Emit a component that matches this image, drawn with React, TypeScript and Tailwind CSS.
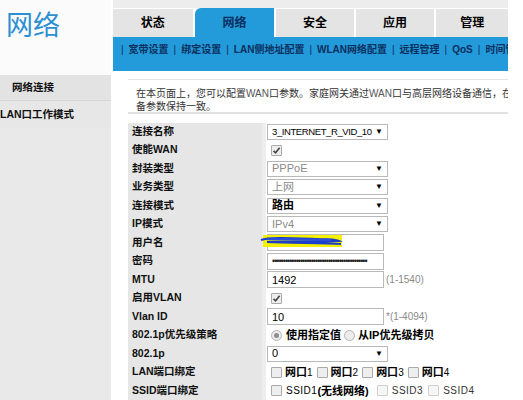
import React from "react";

const F = { fontFamily: '"Liberation Sans", "Noto Sans CJK SC", sans-serif' };

function Arrow() {
  return <span className="text-[8px] text-black leading-none">▼</span>;
}

function Select({ text, tone = "gray", bold = false, small = false }: { text: string; tone?: "gray" | "black"; bold?: boolean; small?: boolean }) {
  return (
    <div className="w-[121px] h-[16px] border border-[#b9b9b9] bg-white flex items-center justify-between pl-[4px] pr-[4px]">
      <span className={`${small ? "text-[9.5px] tracking-[-0.4px]" : "text-[11px]"} leading-none ${tone === "gray" ? "text-[#8a8a8a]" : "text-black"} ${bold ? "font-bold" : ""}`}>{text}</span>
      <Arrow />
    </div>
  );
}

function Check({ checked = false, light = false }: { checked?: boolean; light?: boolean }) {
  return (
    <div className={`w-[11px] h-[11px] border ${light ? "border-[#cfcfcf] bg-[#f6f6f6]" : "border-[#a9a9a9] bg-[#eeeeee]"} rounded-[1px] flex items-center justify-center`}>
      {checked && (
        <svg width="9" height="9" viewBox="0 0 9 9">
          <path d="M1.5 4.8 L3.6 6.8 L7.6 1.8" stroke="#444" strokeWidth="1.6" fill="none" />
        </svg>
      )}
    </div>
  );
}

function Radio({ checked = false }: { checked?: boolean }) {
  return (
    <div className="w-[11px] h-[11px] rounded-full border border-[#b5b5b5] bg-[#ececec] flex items-center justify-center">
      {checked && <div className="w-[5px] h-[5px] rounded-full bg-[#8d8d8d]" />}
    </div>
  );
}

function Input({ children, w = 117 }: { children?: React.ReactNode; w?: number }) {
  return (
    <div className="h-[17px] border border-[#b9b9b9] bg-white flex items-center pl-[4px] text-[11px] text-black overflow-hidden" style={{ width: w }}>
      {children}
    </div>
  );
}

const labels = [
  "连接名称",
  "使能WAN",
  "封装类型",
  "业务类型",
  "连接模式",
  "IP模式",
  "用户名",
  "密码",
  "MTU",
  "启用VLAN",
  "Vlan ID",
  "802.1p优先级策略",
  "802.1p",
  "LAN端口绑定",
  "SSID端口绑定",
];

const subMenu = ["宽带设置", "绑定设置", "LAN侧地址配置", "WLAN网络配置", "远程管理", "QoS", "时间管理"];

export default function App() {
  const values: React.ReactNode[] = [
    <Select key="a" text="3_INTERNET_R_VID_10" tone="black" small />,
    <div key="b" className="pl-[4px]"><Check checked /></div>,
    <Select key="c" text="PPPoE" />,
    <Select key="d" text="上网" />,
    <Select key="e" text="路由" tone="black" bold />,
    <Select key="f" text="IPv4" />,
    <div key="g" className="relative">
      <Input />
      <svg className="absolute left-[-8px] top-[-1px]" width="100" height="18" viewBox="0 0 100 18">
        <rect x="4" y="2" width="79" height="12" fill="#f4f000" />
        <path d="M2 7 C 10 4, 30 5, 60 6 C 70 6, 76 6, 80 8 C 60 9, 30 8, 8 9 C 30 10, 60 10, 82 11" stroke="#1b3fc9" strokeWidth="2" fill="none" />
        <path d="M8 6 L 72 7" stroke="#2a4fd8" strokeWidth="2.4" fill="none" />
      </svg>
    </div>,
    <Input key="h">
      <span className="text-[9px] tracking-[-1px] text-[#222] leading-none whitespace-nowrap">••••••••••••••••••••••••••••••••••••••••••••</span>
    </Input>,
    <div key="i" className="flex items-center">
      <Input>1492</Input>
      <span className="text-[10px] text-[#8a8a8a] ml-[2px]">(1-1540)</span>
    </div>,
    <div key="j" className="pl-[4px]"><Check checked /></div>,
    <div key="k" className="flex items-center">
      <Input>10</Input>
      <span className="text-[10px] text-[#8a8a8a] ml-[2px]">*(1-4094)</span>
    </div>,
    <div key="l" className="flex items-center pl-[4px] text-[11px] font-bold text-black">
      <Radio checked />
      <span className="ml-[4px]">使用指定值</span>
      <span className="ml-[3px]"><Radio /></span>
      <span className="ml-[3px]">从IP优先级拷贝</span>
    </div>,
    <Select key="m" text="0" tone="black" />,
    <div key="n" className="flex items-center pl-[4px] text-[11px] text-black">
      {["1", "2", "3", "4"].map((n) => (
        <span key={n} className="flex items-center mr-[4px]">
          <Check />
          <span className="ml-[3px] font-bold">网口</span>
          <span className="text-[10px]">{n}</span>
        </span>
      ))}
    </div>,
    <div key="o" className="flex items-center pl-[4px] text-[10px] text-black">
      <Check />
      <span className="ml-[4px] tracking-[0.5px]">SSID1</span>
      <span className="font-bold text-[11px]">(无线网络)</span>
      <span className="ml-[8px]"><Check light /></span>
      <span className="ml-[4px] tracking-[0.5px] text-[#333]">SSID3</span>
      <span className="ml-[5px]"><Check light /></span>
      <span className="ml-[4px] tracking-[0.5px] text-[#333]">SSID4</span>
    </div>,
  ];

  return (
    <div className="w-[523px] h-[400px] overflow-hidden bg-white flex" style={F}>
      {/* Sidebar */}
      <div className="w-[111px] h-full flex flex-col shrink-0">
        <div className="h-[75px] bg-[#fbfbfb] pl-[6px] pt-[9px]">
          <span className="text-[27px] leading-[34px] text-[#2c8fd3]">网络</span>
        </div>
        <div className="h-[26px] bg-[#e3e3e3] border-b border-[#d6d6d6] flex items-center pl-[12px] text-[10.5px] font-bold text-[#111]">
          网络连接
        </div>
        <div className="h-[27px] bg-[#e7e7e7] flex items-center pl-0 text-[10.5px] font-bold text-[#111] whitespace-nowrap">
          LAN口工作模式
        </div>
        <div className="flex-1 bg-[#e9e9e9]" />
      </div>

      <div className="w-[2px] shrink-0" />

      {/* Main */}
      <div className="w-[395px] shrink-0 flex flex-col overflow-hidden">
        <div className="h-[9px] bg-[#ededed]" />
        <div className="h-[29px] flex gap-[2px] items-end">
          <div className="w-[80px] h-[28px] bg-[#e4e4e4] flex items-center justify-center text-[12px] font-bold text-black">状态</div>
          <div className="w-[80px] h-[29px] bg-[#239ad9] rounded-tl-[6px] flex items-center justify-center text-[12px] font-bold text-[#0b2f5e]">网络</div>
          <div className="w-[78px] h-[28px] bg-[#e4e4e4] flex items-center justify-center text-[12px] font-bold text-black">安全</div>
          <div className="w-[79px] h-[28px] bg-[#e4e4e4] flex items-center justify-center text-[12px] font-bold text-black">应用</div>
          <div className="w-[72px] h-[28px] bg-[#e4e4e4] flex items-center justify-center text-[12px] font-bold text-black">管理</div>
        </div>
        <div className="h-[36px] bg-[#239ad9] pl-[8px] pt-[6px] overflow-hidden">
          <div className="flex gap-[5px] whitespace-nowrap text-[10px] font-bold text-[#0b2f5e] leading-[14px]">
            {subMenu.map((s) => (
              <React.Fragment key={s}>
                <span className="font-normal">|</span>
                <span>{s}</span>
              </React.Fragment>
            ))}
          </div>
        </div>

        <div className="ml-[15px] mt-[8px] h-[37px] border-t border-[#e4e4e4] border-b-2 border-b-[#e2e2e2] bg-white pl-[8px] pt-[7px] overflow-hidden whitespace-nowrap text-[10px] leading-[13px] text-[#333]">
          <div>在本页面上，您可以配置<span className="text-[#555]">WAN</span>口参数。家庭网关通过<span className="text-[#555]">WAN</span>口与高层网络设备通信，在此处配置的参数应与局端设</div>
          <div>备参数保持一致。</div>
        </div>

        <div className="ml-[15px] mt-[9px] flex">
          <div className="w-[134px] bg-[#e6e6e6] flex flex-col shrink-0">
            {labels.map((l) => (
              <div key={l} className="h-[18.5px] flex items-center pl-[4px] text-[10.5px] font-bold text-[#111] whitespace-nowrap">
                {l}
              </div>
            ))}
          </div>
          <div className="w-[4px] bg-[#eeeeee] shrink-0" />
          <div className="flex-1 flex flex-col bg-white">
            {values.map((v, i) => (
              <div key={i} className="h-[18.5px] flex items-center pl-[1px] whitespace-nowrap">
                {v}
              </div>
            ))}
          </div>
        </div>
      </div>
      <div className="flex-1" />
    </div>
  );
}
